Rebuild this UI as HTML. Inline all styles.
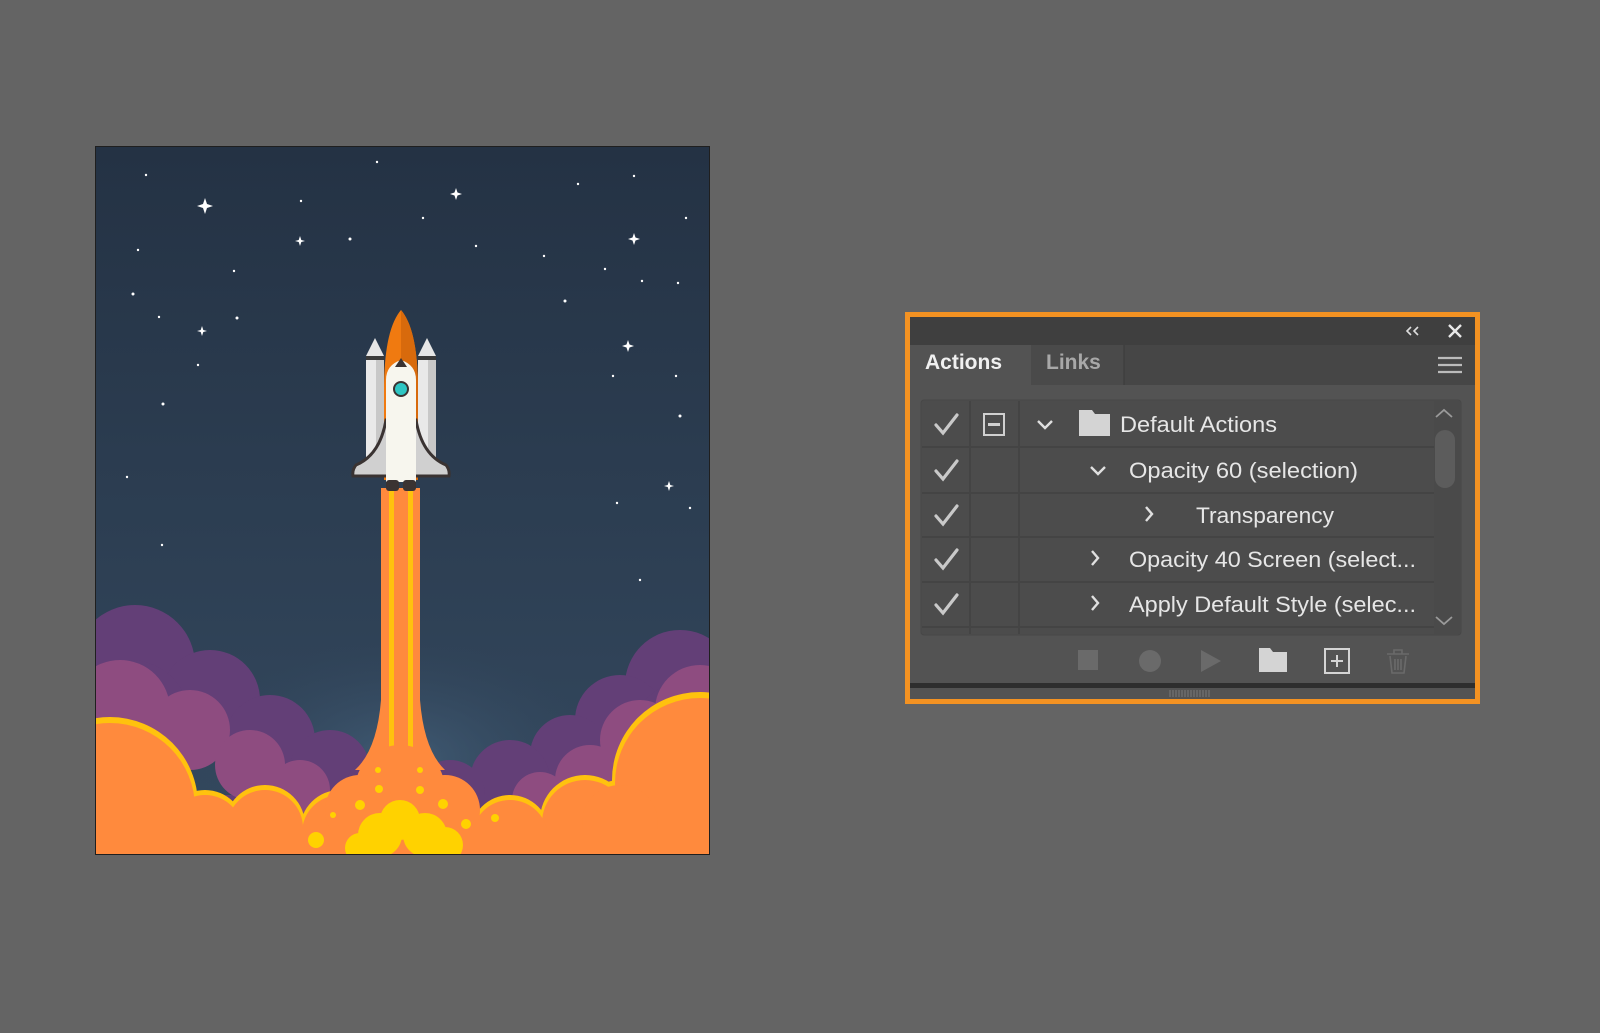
<!DOCTYPE html>
<html><head><meta charset="utf-8"><style>
html,body{margin:0;padding:0;background:#646464;}
svg{display:block}
text{font-family:"Liberation Sans",sans-serif;}
</style></head><body>
<svg width="1600" height="1033" viewBox="0 0 1600 1033" xmlns="http://www.w3.org/2000/svg">
<defs>
<linearGradient id="sky" x1="0" y1="0" x2="0" y2="1">
<stop offset="0" stop-color="#243244"/><stop offset="1" stop-color="#34495f"/>
</linearGradient>
<radialGradient id="glow" cx="0.5" cy="0.5" r="0.5">
<stop offset="0" stop-color="#44607a" stop-opacity="0.8"/><stop offset="1" stop-color="#34495f" stop-opacity="0"/>
</radialGradient>
<clipPath id="art"><rect x="96" y="147" width="613" height="707"/></clipPath>
</defs>
<rect width="1600" height="1033" fill="#646464"/>

<rect x="95" y="146" width="615" height="709" fill="#1f1f1f"/>
<g clip-path="url(#art)">
<rect x="96" y="147" width="613" height="707" fill="url(#sky)"/>
<ellipse cx="400" cy="760" rx="200" ry="120" fill="url(#glow)"/>
<g fill="#fff">
<circle cx="146" cy="175" r="1.2"/><circle cx="377" cy="162" r="1.2"/><circle cx="301" cy="201" r="1.2"/><circle cx="423" cy="218" r="1.2"/>
<circle cx="578" cy="184" r="1.2"/><circle cx="634" cy="176" r="1.2"/><circle cx="686" cy="218" r="1.2"/><circle cx="138" cy="250" r="1.2"/>
<circle cx="350" cy="239" r="1.5"/><circle cx="476" cy="246" r="1.2"/><circle cx="544" cy="256" r="1.2"/><circle cx="234" cy="271" r="1.2"/>
<circle cx="133" cy="294" r="1.5"/><circle cx="605" cy="269" r="1.2"/><circle cx="642" cy="281" r="1.2"/><circle cx="678" cy="283" r="1.2"/>
<circle cx="565" cy="301" r="1.5"/><circle cx="159" cy="317" r="1.2"/><circle cx="237" cy="318" r="1.5"/><circle cx="198" cy="365" r="1.2"/>
<circle cx="613" cy="376" r="1.2"/><circle cx="676" cy="376" r="1.2"/><circle cx="163" cy="404" r="1.5"/><circle cx="680" cy="416" r="1.5"/>
<circle cx="127" cy="477" r="1.2"/><circle cx="617" cy="503" r="1.2"/><circle cx="690" cy="508" r="1.2"/><circle cx="162" cy="545" r="1.2"/><circle cx="640" cy="580" r="1.2"/>
</g>
<g fill="#fff">
<path d="M205 198 L207 204 L213 206 L207 208 L205 214 L203 208 L197 206 L203 204Z"/>
<path d="M456 188 L457.5 192.5 L462 194 L457.5 195.5 L456 200 L454.5 195.5 L450 194 L454.5 192.5Z"/>
<path d="M300 236 L301.3 240 L305 241 L301.3 242 L300 246 L298.7 242 L295 241 L298.7 240Z"/>
<path d="M634 233 L635.5 237.5 L640 239 L635.5 240.5 L634 245 L632.5 240.5 L628 239 L632.5 237.5Z"/>
<path d="M202 326 L203.3 330 L207 331 L203.3 332 L202 336 L200.7 332 L197 331 L200.7 330Z"/>
<path d="M628 340 L629.5 344.5 L634 346 L629.5 347.5 L628 352 L626.5 347.5 L622 346 L626.5 344.5Z"/>
<path d="M669 481 L670.3 485 L674 486 L670.3 487 L669 491 L667.7 487 L664 486 L667.7 485Z"/>
</g>
<g fill="#633f77">
<circle cx="135" cy="665" r="60"/><circle cx="210" cy="700" r="50"/><circle cx="270" cy="740" r="45"/><circle cx="330" cy="770" r="40"/><circle cx="380" cy="790" r="35"/>
<circle cx="680" cy="685" r="55"/><circle cx="620" cy="720" r="45"/><circle cx="570" cy="755" r="40"/><circle cx="510" cy="780" r="40"/><circle cx="450" cy="795" r="35"/>
<circle cx="130" cy="720" r="60"/><circle cx="690" cy="740" r="60"/>
<rect x="96" y="795" width="613" height="65"/>
</g>
<g fill="#8e4c80">
<circle cx="120" cy="710" r="50"/><circle cx="190" cy="730" r="40"/><circle cx="250" cy="765" r="35"/><circle cx="300" cy="790" r="30"/>
<circle cx="700" cy="710" r="45"/><circle cx="640" cy="740" r="40"/><circle cx="590" cy="780" r="35"/><circle cx="540" cy="800" r="28"/>
<rect x="96" y="815" width="613" height="45"/>
</g>
<path d="M381 488 L420 488 L420 700 Q424 750 445 770 L355 770 Q377 750 381 700Z" fill="#ff8a3d"/>
<rect x="389" y="488" width="5" height="300" fill="#ffc20e"/>
<rect x="408" y="488" width="5" height="300" fill="#ffc20e"/>
<g fill="#ffc20e">
<circle cx="110" cy="805" r="88"/><circle cx="265" cy="825" r="40"/><circle cx="340" cy="830" r="40"/><circle cx="205" cy="830" r="40"/>
<circle cx="700" cy="780" r="88"/><circle cx="585" cy="820" r="45"/><circle cx="510" cy="835" r="40"/><circle cx="620" cy="820" r="40"/>
</g>
<g fill="#ff8a3d">
<circle cx="110" cy="808" r="85"/><circle cx="265" cy="828" r="38"/><circle cx="340" cy="833" r="38"/><circle cx="205" cy="833" r="38"/>
<circle cx="700" cy="783" r="85"/><circle cx="585" cy="823" r="43"/><circle cx="510" cy="838" r="38"/><circle cx="620" cy="823" r="38"/>
<circle cx="400" cy="790" r="45"/><circle cx="360" cy="810" r="35"/><circle cx="445" cy="810" r="35"/>
<rect x="96" y="830" width="613" height="30"/>
</g>
<g fill="#ffd200">
<circle cx="380" cy="835" r="22"/><circle cx="400" cy="820" r="20"/><circle cx="425" cy="835" r="22"/><circle cx="445" cy="845" r="18"/><circle cx="360" cy="848" r="15"/>
<circle cx="316" cy="840" r="8"/><circle cx="360" cy="805" r="5"/><circle cx="379" cy="789" r="4"/><circle cx="420" cy="790" r="4"/><circle cx="443" cy="804" r="5"/>
<circle cx="466" cy="824" r="5"/><circle cx="495" cy="818" r="4"/><circle cx="333" cy="815" r="3"/><circle cx="378" cy="770" r="3"/><circle cx="420" cy="770" r="3"/>
</g>
<path d="M384 390 Q384 330 401 310 Q418 330 418 390 L418 480 L384 480Z" fill="#f07a10"/>
<path d="M401 310 Q418 330 418 390 L418 480 L401 480Z" fill="#d86a0c"/>
<path d="M366 356 L375 338 L384 356Z" fill="#e6e6e6"/><path d="M418 356 L427 338 L436 356Z" fill="#e6e6e6"/>
<rect x="366" y="356" width="18" height="115" fill="#e9e9e9"/><rect x="376" y="356" width="8" height="115" fill="#c8c8c8"/>
<rect x="418" y="356" width="18" height="115" fill="#e9e9e9"/><rect x="428" y="356" width="8" height="115" fill="#c8c8c8"/>
<rect x="366" y="356" width="18" height="4" fill="#3a3a3a"/><rect x="418" y="356" width="18" height="4" fill="#3a3a3a"/>
<path d="M386 420 Q380 455 356 465 Q352 470 353 476 L449 476 Q450 470 446 465 Q422 455 416 420Z" fill="#d0d0d0" stroke="#3a3332" stroke-width="3"/>
<path d="M386 380 Q386 365 401 360 Q416 365 416 380 L416 482 L386 482Z" fill="#f7f6ee"/>
<path d="M395 367 L401 358 L407 367Z" fill="#3a3332"/>
<circle cx="401" cy="389" r="7" fill="#2fc6c3" stroke="#3a3332" stroke-width="2"/>
<rect x="386" y="480" width="13" height="11" rx="3" fill="#3a3332"/><rect x="403" y="480" width="13" height="11" rx="3" fill="#3a3332"/>
</g>

<rect x="907.5" y="314.5" width="570" height="387" fill="#535353" stroke="#f39222" stroke-width="5"/>
<rect x="910" y="317" width="565" height="28" fill="#3f3f3f"/>
<rect x="910" y="345" width="565" height="40" fill="#464646"/>
<rect x="910" y="345" width="121" height="40" fill="#535353"/>
<rect x="1031" y="345" width="93" height="40" fill="#4a4a4a"/>
<line x1="1124" y1="345" x2="1124" y2="385" stroke="#3a3a3a"/>
<text x="925" y="369" font-size="21" font-weight="bold" fill="#f0f0f0">Actions</text>
<text x="1046" y="369" font-size="21" font-weight="bold" fill="#a8a8a8">Links</text>
<path d="M1411 327 L1407 331 L1411 335 M1418 327 L1414 331 L1418 335" stroke="#ddd" stroke-width="1.6" fill="none"/>
<path d="M1449 325 L1461 337 M1461 325 L1449 337" stroke="#e8e8e8" stroke-width="2.4"/>
<path d="M1438 358 H1462 M1438 365 H1462 M1438 372 H1462" stroke="#bbb" stroke-width="2.2"/>
<rect x="921" y="400" width="540" height="235" rx="3" fill="#4c4c4c" stroke="#474747"/>
<g stroke="#444" stroke-width="2">
<line x1="922" y1="447" x2="1434" y2="447"/><line x1="922" y1="493" x2="1434" y2="493"/><line x1="922" y1="537" x2="1434" y2="537"/>
<line x1="922" y1="582" x2="1434" y2="582"/><line x1="922" y1="627" x2="1434" y2="627"/>
<line x1="970" y1="401" x2="970" y2="634"/><line x1="1019" y1="401" x2="1019" y2="634"/>
</g>
<g stroke="#c9c9c9" stroke-width="3.2" fill="none" stroke-linecap="round">
<path d="M936 425 L943 433 L957 415"/><path d="M936 471 L943 479 L957 461"/><path d="M936 516 L943 524 L957 506"/>
<path d="M936 560 L943 568 L957 550"/><path d="M936 605 L943 613 L957 595"/>
</g>
<rect x="984" y="414" width="20" height="21" fill="none" stroke="#d0d0d0" stroke-width="2"/>
<rect x="988" y="423" width="12" height="3" fill="#d0d0d0"/>
<g stroke="#e0e0e0" stroke-width="2.4" fill="none">
<path d="M1038 421 L1045 428 L1052 421"/><path d="M1091 467 L1098 474 L1105 467"/>
<path d="M1146 507 L1152 514 L1146 521"/><path d="M1092 551 L1098 558 L1092 565"/><path d="M1092 596 L1098 603 L1092 610"/>
</g>
<path d="M1079 410 L1092 410 L1095 414 L1110 414 L1110 436 L1079 436Z" fill="#d4d4d4"/>
<g font-size="22" fill="#e6e6e6">
<text x="1120" y="432" textLength="157" lengthAdjust="spacingAndGlyphs">Default Actions</text>
<text x="1129" y="478" textLength="229" lengthAdjust="spacingAndGlyphs">Opacity 60 (selection)</text>
<text x="1196" y="523" textLength="138" lengthAdjust="spacingAndGlyphs">Transparency</text>
<text x="1129" y="567" textLength="287" lengthAdjust="spacingAndGlyphs">Opacity 40 Screen (select...</text>
<text x="1129" y="612" textLength="287" lengthAdjust="spacingAndGlyphs">Apply Default Style (selec...</text>
</g>
<rect x="1434" y="401" width="26" height="233" fill="#4a4a4a"/>
<path d="M1436 417 L1444 410 L1452 417" stroke="#9a9a9a" stroke-width="1.8" fill="none"/>
<path d="M1436 617 L1444 624 L1452 617" stroke="#9a9a9a" stroke-width="1.8" fill="none"/>
<rect x="1435" y="430" width="20" height="58" rx="10" fill="#5c5c5c"/>
<rect x="1078" y="650" width="20" height="20" fill="#6a6a6a"/>
<circle cx="1150" cy="661" r="11" fill="#6a6a6a"/>
<path d="M1201 650 L1221 661 L1201 672Z" fill="#6a6a6a"/>
<path d="M1259 648 L1270 648 L1273 652 L1287 652 L1287 672 L1259 672Z" fill="#d4d4d4"/>
<rect x="1325" y="649" width="24" height="24" fill="none" stroke="#d4d4d4" stroke-width="2"/>
<path d="M1337 655 V667 M1331 661 H1343" stroke="#d4d4d4" stroke-width="2"/>
<path d="M1387 654 H1409 M1394 654 V650 H1402 V654 M1390 656 L1392 673 H1404 L1406 656 M1395 659 V670 M1398 659 V670 M1401 659 V670" stroke="#6a6a6a" stroke-width="1.6" fill="none"/>
<rect x="910" y="683" width="565" height="5" fill="#2e2e2e"/>
<rect x="910" y="688" width="565" height="11" fill="#535353"/>
<path d="M1170 690 V697 M1173 690 V697 M1176 690 V697 M1179 690 V697 M1182 690 V697 M1185 690 V697 M1188 690 V697 M1191 690 V697 M1194 690 V697 M1197 690 V697 M1200 690 V697 M1203 690 V697 M1206 690 V697 M1209 690 V697" stroke="#7a7a7a" stroke-width="1"/>
</svg>
</body></html>
